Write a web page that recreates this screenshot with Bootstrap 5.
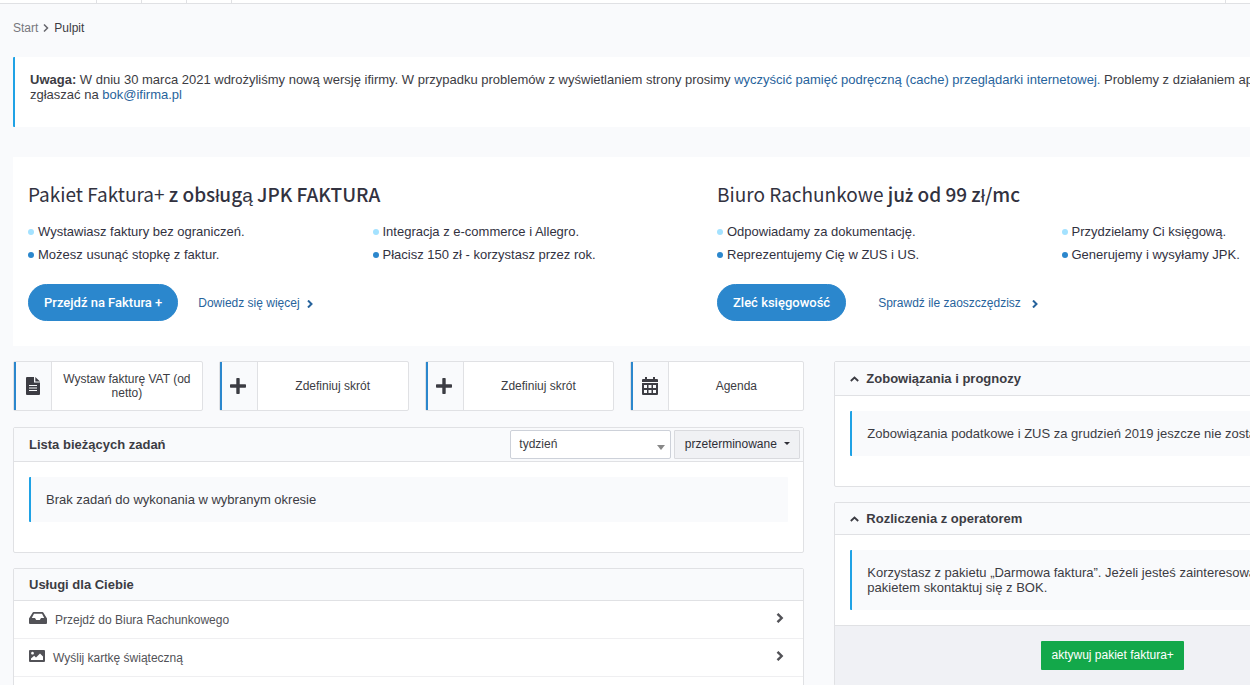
<!DOCTYPE html>
<html lang="pl">
<head>
<meta charset="utf-8">
<meta name="viewport" content="width=device-width, initial-scale=1">
<title>Pulpit</title>
<link rel="stylesheet" href="https://cdn.jsdelivr.net/npm/bootstrap@5.3.0/dist/css/bootstrap.min.css">
<style>
  :root { --line: #e0e1e4; --ink: #3c3c43; --pale: #f9fafc; --blue: #2b87cd; --accent: #1fa2e5; }
  body { background: var(--pale); color: var(--ink); font: 13px/15px "Liberation Sans", Arial, sans-serif; overflow-x: hidden; }
  a { color: #27639c; text-decoration: none; }
  svg { display: block; fill: currentColor; }
  /* desktop layout keeps a minimum width and is clipped on narrower windows */
  .desk { min-width: 1404px; }
  .topbar { height: 4px; border-bottom: 1px solid var(--line); background: #fff; }
  .topbar span { width: 45px; border-right: 1px solid var(--line); }
  .topbar .wide { width: 97px; }
  .topbar .rest { width: 179px; border-left: 1px solid var(--line); border-right: 0; }
  .page { padding: 16px 13px; }
  .crumbs { font-size: 12px; line-height: 16px; margin-bottom: 21px; padding: 0; }
  .crumbs a { color: #77777d; }
  .note { border-left: 2px solid var(--accent); border-radius: 1px; background: var(--pale); padding: 15px; }
  .note-top { background: #fff; min-height: 70px; margin-bottom: 30px; }
  .promo { background: #fff; padding: 24px 0 25px; margin-bottom: 15px; color: #32323f; }
  .promo .row, .main-row { --bs-gutter-x: 30px; }
  .promo h2 { font: 400 19px/26px "Noto Sans CJK SC", sans-serif; margin: 0 0 13px; }
  .promo h2 b { font-weight: 500; }
  .promo h2 .dotted { font-family: "Noto Sans", sans-serif; font-weight: 600; font-size: 17px; line-height: 1; }
  .promo li { display: flex; align-items: center; gap: 4px; line-height: 23px; }
  .promo li::before { content: ""; width: 6px; height: 6px; border-radius: 50%; background: #a4e2ff; }
  .promo li:last-child::before { background: var(--blue); }
  .promo .acts { margin-top: 18px; }
  .promo .btn { --bs-btn-color: #fff; --bs-btn-bg: var(--blue); --bs-btn-border-color: var(--blue); --bs-btn-hover-color: #fff; --bs-btn-hover-bg: #2373b2; font: 500 13px/17px Roboto, sans-serif; padding: 9px 15px; }
  .more { font-size: 12px; gap: 6px; padding-top: 2px; }
  .shortcuts { display: grid; grid-template-columns: 12fr 12fr 12fr 11fr; gap: 16px; margin-bottom: 16px; }
  .shortcut { display: flex; min-height: 50px; border: 1px solid var(--line); border-radius: 2px; background: #fff; color: var(--ink); font-size: 12px; line-height: 14px; text-align: center; }
  .shortcut .pic { flex: 0 0 38px; display: grid; place-items: center; padding-right: 2px; background: var(--pale); border-left: 2px solid var(--blue); border-right: 1px solid var(--line); }
  .shortcut .txt { flex: 1; display: grid; place-items: center; padding: 0 8px; }
  .panel { border: 1px solid var(--line); border-radius: 2px; background: #fff; }
  .panel + .panel { margin-top: 15px; }
  .panel-head { display: flex; align-items: center; min-height: 32px; padding: 0 15px; border-bottom: 1px solid var(--line); background: var(--pale); gap: 7px; }
  .panel-head h3 { font-size: 13px; line-height: 15px; font-weight: 700; margin: 0; }
  .tall { min-height: 34px; }
  .panel-main { padding: 15px; }
  .roomy { padding-bottom: 30px; }
  .tools { gap: 3px; margin-right: -12px; }
  .tools .form-select { width: 161px; height: 29px; padding: 0 8px; font-size: 12px; line-height: 15px; color: var(--ink); border-color: #cdd1d9; border-radius: 2px;
    background-image: url("data:image/svg+xml,%3Csvg xmlns='http://www.w3.org/2000/svg' viewBox='0 0 8 5'%3E%3Cpath fill='%23888' d='M0 0h8L4 5z'/%3E%3C/svg%3E"); background-size: 8px 5px; background-position: right 5px top 14px; }
  .tools .btn { height: 29px; width: 126px; padding: 0; font-size: 12px; line-height: 15px; color: #2e2e36; background: #f0f1f4; border: 1px solid #d9dade; border-radius: 1px; }
  .tools .btn::after { margin-left: 7px; border-width: 3px 3px 0; vertical-align: 3px; }
  .services { padding-bottom: 16px; }
  .svc { display: flex; align-items: center; height: 38px; padding: 0 19px 3px 15px; border-bottom: 1px solid #efeff1; color: #525257; font-size: 12px; gap: 8px; }
  .svc span { padding-top: 4px; }
  .panel-foot { border-top: 1px solid var(--line); background: #f0f1f5; padding: 15px; text-align: center; }
  .panel-foot .btn { background: #13a84a; color: #fff; font-size: 12px; line-height: 15px; padding: 7px 10px; border: 0; border-radius: 1px; }
</style>
</head>
<body>
<div class="desk">
  <header class="topbar d-flex"><span class="wide"></span><span></span><span></span><span></span><span class="rest ms-auto"></span></header>
  <main class="page">
    <nav class="crumbs d-flex align-items-center" aria-label="Ścieżka">
      <a href="#">Start</a>
      <svg class="mx-1" width="8" height="8" viewBox="0 0 8 8"><path d="M2 0.5 5.500 4 2 7.500" fill="none" stroke="#66666c" stroke-width="1.500"/></svg>
      <span>Pulpit</span>
    </nav>

    <div class="note note-top"><b>Uwaga:</b> W dniu 30 marca 2021 wdrożyliśmy nową wersję ifirmy. W przypadku problemów z wyświetlaniem strony prosimy <a href="#">wyczyścić pamięć podręczną (cache) przeglądarki internetowej.</a> Problemy z działaniem aplikacji prosimy zgłaszać na <a href="#">bok@ifirma.pl</a></div>

    <section class="promo">
      <div class="row mx-0">
        <div class="col-6">
          <h2>Pakiet Faktura+ <b>z obsługą JPK FAKTURA</b></h2>
          <div class="row">
            <ul class="col-6 list-unstyled mb-0"><li>Wystawiasz faktury bez ograniczeń.</li><li>Możesz usunąć stopkę z faktur.</li></ul>
            <ul class="col-6 list-unstyled mb-0"><li>Integracja z e-commerce i Allegro.</li><li>Płacisz 150 zł - korzystasz przez rok.</li></ul>
          </div>
          <div class="acts d-flex align-items-center">
            <button type="button" class="btn rounded-pill">Przejdź na Faktura +</button>
            <a href="#" class="more d-flex align-items-center ms-3 ps-1">Dowiedz się więcej
              <svg width="8" height="8" viewBox="0 0 8 8"><path d="M2 .5 5.500 4 2 7.500" fill="none" stroke="currentColor" stroke-width="2"/></svg></a>
          </div>
        </div>
        <div class="col-6">
          <h2>Biuro Rachunkowe <b>ju<span class="dotted">ż</span> od 99 zł/mc</b></h2>
          <div class="row">
            <ul class="col-6 list-unstyled mb-0"><li>Odpowiadamy za dokumentację.</li><li>Reprezentujemy Cię w ZUS i US.</li></ul>
            <ul class="col-6 list-unstyled mb-0"><li>Przydzielamy Ci księgową.</li><li>Generujemy i wysyłamy JPK.</li></ul>
          </div>
          <div class="acts d-flex align-items-center">
            <button type="button" class="btn rounded-pill">Zleć księgowość</button>
            <a href="#" class="more d-flex align-items-center ms-3 ps-3">Sprawdź ile zaoszczędzisz
              <svg class="ms-1" width="8" height="8" viewBox="0 0 8 8"><path d="M2 .5 5.500 4 2 7.500" fill="none" stroke="currentColor" stroke-width="2"/></svg></a>
          </div>
        </div>
      </div>
    </section>

    <div class="row main-row">
      <div class="col-7">
        <div class="shortcuts">
          <a href="#" class="shortcut"><span class="pic"><svg width="14" height="18" viewBox="0 0 14 18"><path fill-rule="evenodd" d="M1 0h7v5.500h6V17a1 1 0 0 1-1 1H1a1 1 0 0 1-1-1V1a1 1 0 0 1 1-1zM3 8v1h8V8zm0 2.500v1h8v-1zM3 13v1h8v-1z"/><path d="M9.300 0 14 4.500H9.300z"/></svg></span><span class="txt">Wystaw fakturę VAT (od netto)</span></a>
          <a href="#" class="shortcut"><span class="pic"><svg width="16" height="16" viewBox="0 0 16 16"><path d="M7 0h2q.7 0 .7.700V6.300h5.600q.7 0 .7.700v2q0 .7-.7.700H9.700v5.600q0 .7-.7.700H7q-.7 0-.7-.7V9.700H.7Q0 9.700 0 9V7q0-.7.700-.7h5.600V.7Q6.300 0 7 0z"/></svg></span><span class="txt">Zdefiniuj skrót</span></a>
          <a href="#" class="shortcut"><span class="pic"><svg width="16" height="16" viewBox="0 0 16 16"><path d="M7 0h2q.7 0 .7.700V6.300h5.600q.7 0 .7.700v2q0 .7-.7.700H9.700v5.600q0 .7-.7.700H7q-.7 0-.7-.7V9.700H.7Q0 9.700 0 9V7q0-.7.700-.7h5.600V.7Q6.300 0 7 0z"/></svg></span><span class="txt">Zdefiniuj skrót</span></a>
          <a href="#" class="shortcut"><span class="pic"><svg width="16" height="18" viewBox="0 0 16 18"><path fill-rule="evenodd" d="M3 0h2v2h6V0h2v2h2a1 1 0 0 1 1 1v2H0V3a1 1 0 0 1 1-1h2zM0 6h16v11a1 1 0 0 1-1 1H1a1 1 0 0 1-1-1zM2 8v3h3V8zm4.500 0v3h3V8zM11 8v3h3V8zM2 13v3h3v-3zm4.500 0v3h3v-3zm4.500 0v3h3v-3z"/></svg></span><span class="txt">Agenda</span></a>
        </div>

        <section class="panel">
          <div class="panel-head tall">
            <h3>Lista bieżących zadań</h3>
            <div class="tools d-flex ms-auto">
              <select class="form-select" aria-label="Okres"><option>tydzień</option></select>
              <button type="button" class="btn dropdown-toggle">przeterminowane</button>
            </div>
          </div>
          <div class="panel-main roomy"><div class="note">Brak zadań do wykonania w wybranym okresie</div></div>
        </section>

        <section class="panel services">
          <div class="panel-head"><h3>Usługi dla Ciebie</h3></div>
          <a href="#" class="svc"><svg width="18" height="12" viewBox="0 0 18 12"><path fill-rule="evenodd" d="M4.500 0h9a1 1 0 0 1 .8.500L18 6.500V11a1 1 0 0 1-1 1H1a1 1 0 0 1-1-1V6.500L3.700.5a1 1 0 0 1 .8-.5zM5 1.700 2.800 6H6L7.200 8h3.600L12 6h3.200L13 1.700z"/></svg><span>Przejdź do Biura Rachunkowego</span><svg class="ms-auto" width="8" height="10" viewBox="0 0 8 10"><path d="M1.500.8 5.700 5 1.500 9.200" fill="none" stroke="currentColor" stroke-width="2.400"/></svg></a>
          <a href="#" class="svc"><svg width="16" height="12" viewBox="0 0 16 12"><path fill-rule="evenodd" d="M1 0h14a1 1 0 0 1 1 1v10a1 1 0 0 1-1 1H1a1 1 0 0 1-1-1V1a1 1 0 0 1 1-1zM2 10h12V6.500L11 3.500 7 7.500 5.200 5.800 2 8.500zM3.500 1.800a1.400 1.400 0 1 0 .01 0z"/></svg><span>Wyślij kartkę świąteczną</span><svg class="ms-auto" width="8" height="10" viewBox="0 0 8 10"><path d="M1.500.8 5.700 5 1.500 9.200" fill="none" stroke="currentColor" stroke-width="2.400"/></svg></a>
        </section>
      </div>

      <div class="col-5">
        <section class="panel">
          <div class="panel-head tall">
            <svg width="9" height="6" viewBox="0 0 9 6"><path d="M.8 5 4.500 1.500 8.200 5" fill="none" stroke="currentColor" stroke-width="1.800"/></svg>
            <h3>Zobowiązania i prognozy</h3>
          </div>
          <div class="panel-main roomy"><div class="note">Zobowiązania podatkowe i ZUS za grudzień 2019 jeszcze nie zostały wyliczone.</div></div>
        </section>
        <section class="panel">
          <div class="panel-head">
            <svg width="9" height="6" viewBox="0 0 9 6"><path d="M.8 5 4.500 1.500 8.200 5" fill="none" stroke="currentColor" stroke-width="1.800"/></svg>
            <h3>Rozliczenia z operatorem</h3>
          </div>
          <div class="panel-main"><div class="note">Korzystasz z pakietu „Darmowa faktura”. Jeżeli jesteś zainteresowany płatnym pakietem skontaktuj się z BOK.</div></div>
          <div class="panel-foot"><button type="button" class="btn">aktywuj pakiet faktura+</button></div>
        </section>
      </div>
    </div>
  </main>
</div>
<script src="https://cdn.jsdelivr.net/npm/bootstrap@5.3.0/dist/js/bootstrap.bundle.min.js"></script>
</body>
</html>
